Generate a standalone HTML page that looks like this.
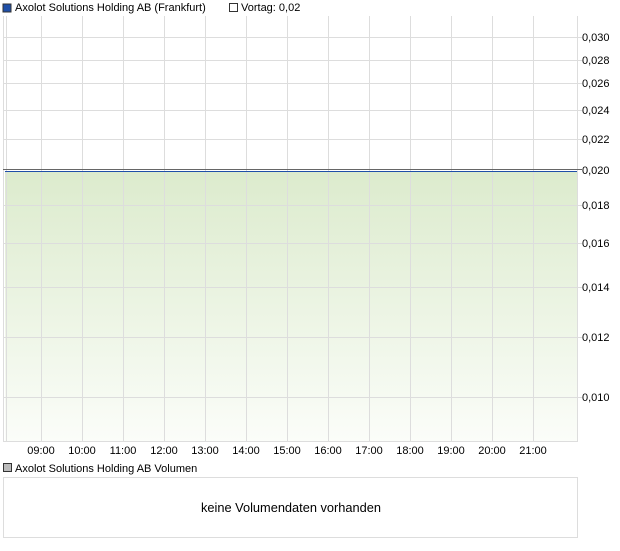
<!DOCTYPE html>
<html><head><style>
body{margin:0;background:#fff;width:620px;height:546px;overflow:hidden;font-family:"Liberation Sans",sans-serif}
</style></head><body>
<svg width="620" height="546" xmlns="http://www.w3.org/2000/svg" font-family="Liberation Sans, sans-serif" font-size="11" fill="#000">
<defs><linearGradient id="g" x1="0" y1="0" x2="0" y2="1"><stop offset="0" stop-color="#dcebcd"/><stop offset="1" stop-color="#fbfdf9"/></linearGradient></defs>
<rect x="3" y="4" width="8" height="8" fill="#1f4fa8" stroke="#333" stroke-width="1"/>
<text x="15" y="11">Axolot Solutions Holding AB (Frankfurt)</text>
<rect x="229.5" y="3.5" width="8" height="8" fill="#fff" stroke="#333"/>
<text x="241" y="11">Vortag: 0,02</text>
<rect x="5" y="171" width="572" height="270" fill="url(#g)"/>
<g stroke="#dddddd" stroke-width="1">
<line x1="3.5" y1="16" x2="3.5" y2="441"/><line x1="6.5" y1="16" x2="6.5" y2="441"/>
<line x1="41.5" y1="16" x2="41.5" y2="441"/><line x1="82.5" y1="16" x2="82.5" y2="441"/><line x1="123.5" y1="16" x2="123.5" y2="441"/><line x1="164.5" y1="16" x2="164.5" y2="441"/><line x1="205.5" y1="16" x2="205.5" y2="441"/><line x1="246.5" y1="16" x2="246.5" y2="441"/><line x1="287.5" y1="16" x2="287.5" y2="441"/><line x1="328.5" y1="16" x2="328.5" y2="441"/><line x1="369.5" y1="16" x2="369.5" y2="441"/><line x1="410.5" y1="16" x2="410.5" y2="441"/><line x1="451.5" y1="16" x2="451.5" y2="441"/><line x1="492.5" y1="16" x2="492.5" y2="441"/><line x1="533.5" y1="16" x2="533.5" y2="441"/>
<line x1="3" y1="37.5" x2="582" y2="37.5"/><line x1="3" y1="60.5" x2="582" y2="60.5"/><line x1="3" y1="83.5" x2="582" y2="83.5"/><line x1="3" y1="110.5" x2="582" y2="110.5"/><line x1="3" y1="139.5" x2="582" y2="139.5"/><line x1="3" y1="205.5" x2="582" y2="205.5"/><line x1="3" y1="243.5" x2="582" y2="243.5"/><line x1="3" y1="287.5" x2="582" y2="287.5"/><line x1="3" y1="337.5" x2="582" y2="337.5"/><line x1="3" y1="397.5" x2="582" y2="397.5"/>
<line x1="577.5" y1="16" x2="577.5" y2="441"/><line x1="3" y1="441.5" x2="578" y2="441.5"/>
</g>
<line x1="3" y1="169.5" x2="582" y2="169.5" stroke="#666"/>
<line x1="5" y1="171.5" x2="577" y2="171.5" stroke="#1f4fa8"/>
<g font-size="11">
<text x="582" y="41">0,030</text><text x="582" y="64">0,028</text><text x="582" y="87">0,026</text><text x="582" y="114">0,024</text><text x="582" y="143">0,022</text><text x="582" y="174">0,020</text><text x="582" y="209">0,018</text><text x="582" y="247">0,016</text><text x="582" y="291">0,014</text><text x="582" y="341">0,012</text><text x="582" y="401">0,010</text>
</g>
<g text-anchor="middle" font-size="11">
<text x="41" y="454">09:00</text><text x="82" y="454">10:00</text><text x="123" y="454">11:00</text><text x="164" y="454">12:00</text><text x="205" y="454">13:00</text><text x="246" y="454">14:00</text><text x="287" y="454">15:00</text><text x="328" y="454">16:00</text><text x="369" y="454">17:00</text><text x="410" y="454">18:00</text><text x="451" y="454">19:00</text><text x="492" y="454">20:00</text><text x="533" y="454">21:00</text>
</g>
<rect x="3.5" y="463.5" width="8" height="8" fill="#bbb" stroke="#333"/>
<text x="15" y="472">Axolot Solutions Holding AB Volumen</text>
<rect x="3.5" y="477.5" width="574" height="60" fill="#fff" stroke="#dddddd"/>
<text x="291" y="512" text-anchor="middle" font-size="12.8">keine Volumendaten vorhanden</text>
</svg>
</body></html>
